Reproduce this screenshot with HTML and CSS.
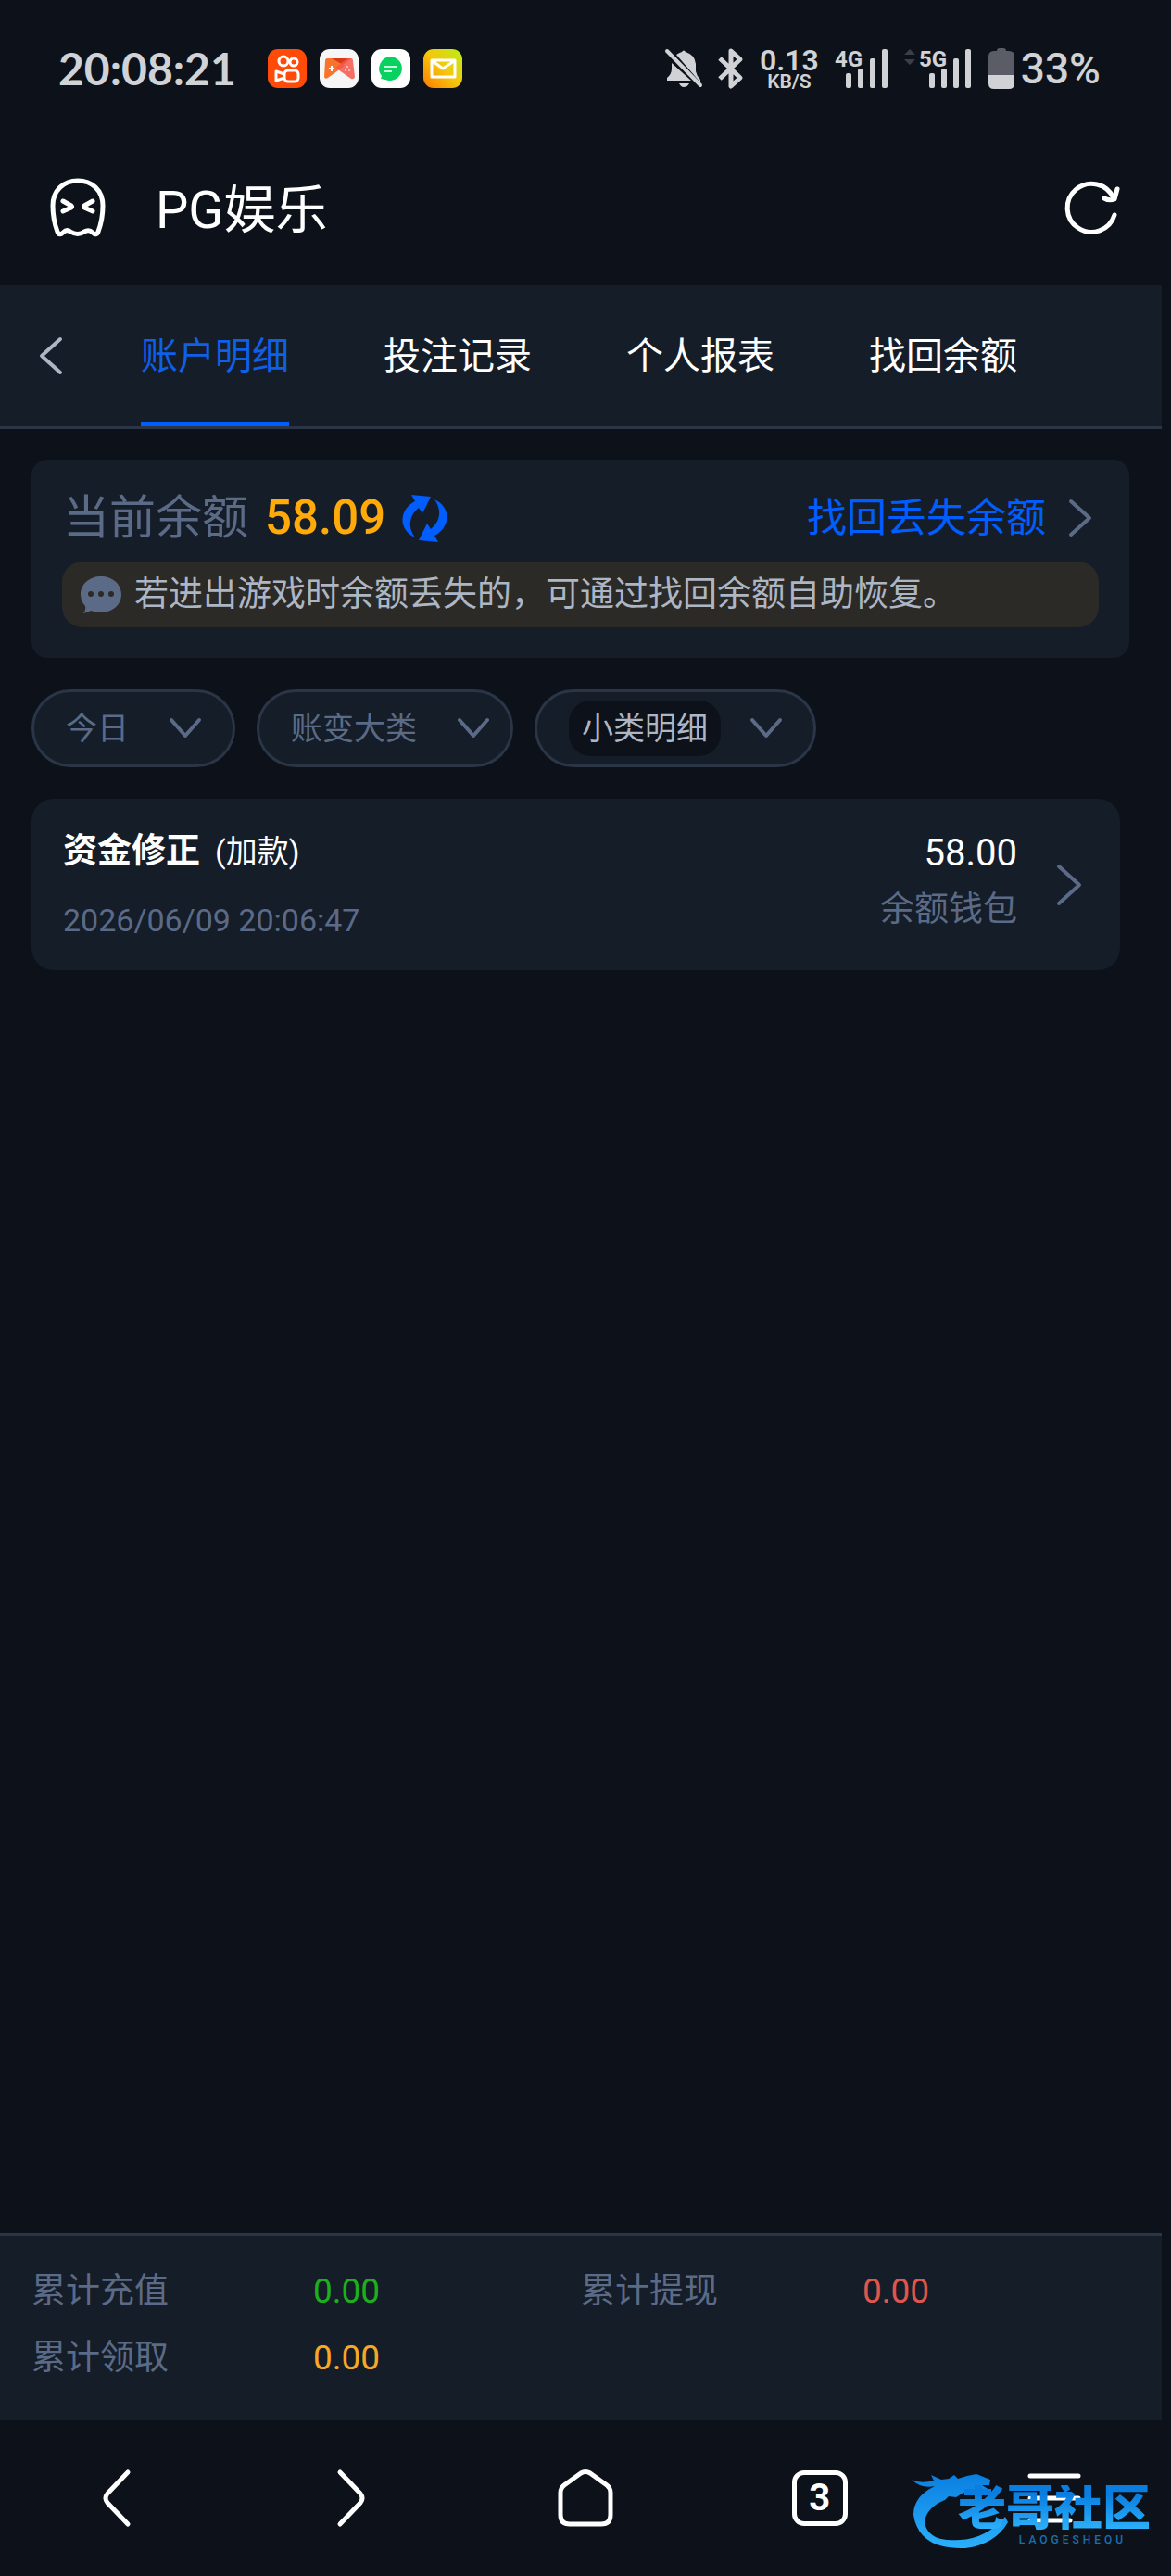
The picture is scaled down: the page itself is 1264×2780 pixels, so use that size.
FILE: index.html
```html
<!DOCTYPE html>
<html lang="zh-CN">
<head>
    <meta charset="UTF-8">
    <meta name="viewport" content="width=device-width, initial-scale=1.0">
    <title>PG娱乐</title>
    <link rel="stylesheet" href="styles.css">
</head>
<body>
    <div class="status-bar">
        <span class="clock">20:08:21</span>
        <div class="app-icons">
            <svg width="42" height="42" viewBox="0 0 42 42">
                <rect width="42" height="42" rx="11" fill="#ff4a08"/>
                <g fill="none" stroke="#fff" stroke-width="3" stroke-linejoin="round">
                    <circle cx="17" cy="13" r="5"/>
                    <circle cx="28" cy="14" r="4"/>
                    <rect x="18" y="23" width="15" height="12" rx="4"/>
                    <path d="M18 27L9 24V34L18 31"/>
                </g>
            </svg>
            <svg width="42" height="42" viewBox="0 0 42 42">
                <rect width="42" height="42" rx="11" fill="#f6f6f6"/>
                <path d="M8 10H34L21 20Z" fill="#d93a14"/>
                <path d="M8 10Q6 10 6 13L5 30Q6 33 9 31L27 18L13 10Z" fill="#f8742c"/>
                <path d="M34 10Q36 10 36 13L38 30Q37 33 34 32L17 20L30 10Z" fill="#f4574a" fill-opacity=".85"/>
                <path d="M10 21H16M13 18V24" stroke="#fff" stroke-width="2"/>
                <g fill="#fcc"><circle cx="30" cy="19" r="1"/><circle cx="28" cy="23" r="1"/><circle cx="32" cy="23" r="1"/></g>
            </svg>
            <svg width="42" height="42" viewBox="0 0 42 42">
                <rect width="42" height="42" rx="11" fill="#fff"/>
                <path d="M21 8A13 13 0 1 1 15 33L10 32L11 29A13 13 0 0 1 21 8Z" fill="#07d160"/>
                <path d="M14 19H28M14 24H22" stroke="#c6ffdc" stroke-width="2"/>
            </svg>
            <svg width="42" height="42" viewBox="0 0 42 42">
                <defs>
                    <linearGradient id="mail" x1="0" y1="1" x2="1" y2="0">
                        <stop offset="0" stop-color="#ff7a00"/>
                        <stop offset=".5" stop-color="#f5c60c"/>
                        <stop offset="1" stop-color="#b8f016"/>
                    </linearGradient>
                </defs>
                <rect width="42" height="42" rx="11" fill="url(#mail)"/>
                <path d="M9 12H34V30H9ZM10 13L21 21L33 13" fill="none" stroke="#fff" stroke-width="3" stroke-linejoin="round"/>
            </svg>
        </div>

        <div class="status-right">
            <svg class="bell" width="40" height="42" viewBox="0 0 40 42" fill="currentColor">
                <path d="M12 6Q15 4 18 3Q20 0 22 3Q32 6 33 16V24Q34 29 38 33V36Z"/>
                <path d="M7 15L28 34H2V31Q7 27 7 21Z"/>
                <path d="M15 37H26Q24 41 20 41Q17 41 15 37Z"/>
                <path d="M2 2L38 39" stroke="currentColor" stroke-width="4" stroke-linecap="round"/>
            </svg>
            <svg class="bluetooth" width="28" height="44" viewBox="0 0 28 44" fill="none" stroke="currentColor" stroke-width="5" stroke-linejoin="round">
                <path d="M2 11L24 32L14 41V3L24 12L2 33"/>
            </svg>
            <div class="speed">
                <span class="speed-value">0.13</span>
                <span class="speed-unit">KB/S</span>
            </div>
            <svg class="signal" width="58" height="44" viewBox="0 0 58 44" fill="currentColor">
                <text x="0" y="20">4G</text>
                <rect x="12" y="27" width="6" height="16" rx="2"/>
                <rect x="25" y="22" width="6" height="21" rx="2"/>
                <rect x="38" y="11" width="6" height="32" rx="2"/>
                <rect x="51" y="1" width="6" height="42" rx="2"/>
            </svg>
            <svg class="signal" width="74" height="44" viewBox="0 0 74 44" fill="currentColor">
                <path d="M0 7L6 1L12 7ZM0 12L6 18L12 12Z" fill="#3a3f49"/>
                <text x="16" y="20">5G</text>
                <rect x="27" y="27" width="6" height="16" rx="2"/>
                <rect x="40" y="22" width="6" height="21" rx="2"/>
                <rect x="53" y="11" width="6" height="32" rx="2"/>
                <rect x="66" y="1" width="6" height="42" rx="2"/>
            </svg>
            <div class="battery">
                <svg width="28" height="44" viewBox="0 0 28 44">
                    <path d="M9 3Q9 0 12 0H16Q19 0 19 3H22Q28 3 28 9V29H0V9Q0 3 6 3Z" fill="#5a5d65"/>
                    <path d="M0 29H28V38Q28 44 22 44H6Q0 44 0 38Z" fill="currentColor"/>
                </svg>
                <span>33%</span>
            </div>
        </div>
    </div>

    <header class="header">
        <svg width="60" height="64" viewBox="0 0 60 64" fill="none" stroke="#fff" stroke-width="5" stroke-linecap="round" stroke-linejoin="round">
            <path d="M3 30C3 42 5 50 8 58Q10 63 14 59Q18 55 22 58Q30 63 37 58Q42 55 46 59Q50 63 52 58C55 50 57 42 57 30C57 13 45 3 30 3C15 3 3 13 3 30Z"/>
            <path d="M14 25L23 30Q24 31 23 32L14 36M46 25L37 30Q36 31 37 32L46 36"/>
        </svg>
        <h1>PG娱乐</h1>
        <button type="button" class="icon-btn" aria-label="刷新">
            <svg width="60" height="60" viewBox="0 0 60 60" fill="none" stroke="#fff" stroke-width="5" stroke-linecap="round" stroke-linejoin="round">
                <path d="M54 38A26 26 0 1 1 53 20"/>
                <path d="M57 10L54 21Q48 23 43 20"/>
            </svg>
        </button>
    </header>

    <nav class="tabs">
        <button type="button" class="icon-btn back" aria-label="返回">
            <svg width="26" height="42" viewBox="0 0 26 42"><path d="M23 3L3 21L23 39"/></svg>
        </button>
        <a href="#" class="tab active">账户明细</a>
        <a href="#" class="tab">投注记录</a>
        <a href="#" class="tab">个人报表</a>
        <a href="#" class="tab">找回余额</a>
    </nav>

    <main class="content">
        <section class="balance-card">
            <div class="balance-row">
                <span class="balance-label">当前余额</span>
                <span class="balance-value">58.09</span>
                <button type="button" class="icon-btn" aria-label="刷新余额">
                    <svg width="49" height="51" viewBox="0 0 49 51" fill="#005dfe">
                        <path id="swirl" d="M10 0L31 2L22 20L18 14C6 24 7 36 14 46C-4 38 -4 16 14 7Z"/>
                        <use href="#swirl" transform="rotate(180 24.500 25.500)"/>
                    </svg>
                </button>
                <a href="#" class="recover">
                    找回丢失余额
                    <svg width="26" height="42" viewBox="0 0 26 42"><path d="M3 3L23 21L3 39"/></svg>
                </a>
            </div>
            <p class="notice">
                <svg width="44" height="40" viewBox="0 0 44 40">
                    <path d="M22 0C34 0 44 8 44 19.500S34 39 22 39Q16 39 11 37Q8 39 3 40Q6 36 5 32Q0 27 0 19.500C0 8 10 0 22 0Z" fill="#5b6b87"/>
                    <g fill="#2c2a26"><circle cx="11" cy="19" r="3"/><circle cx="22" cy="19" r="3"/><circle cx="33" cy="19" r="3"/></g>
                </svg>
                若进出游戏时余额丢失的，可通过找回余额自助恢复。
            </p>
        </section>

        <form class="filters">
            <label class="filter">
                <select aria-label="日期"><option>今日</option></select>
                <svg width="34" height="22" viewBox="0 0 34 22"><path d="M2 2L17 19L32 2"/></svg>
            </label>
            <label class="filter filter-type">
                <select aria-label="账变大类"><option>账变大类</option></select>
                <svg width="34" height="22" viewBox="0 0 34 22"><path d="M2 2L17 19L32 2"/></svg>
            </label>
            <label class="filter filter-detail">
                <select aria-label="小类明细"><option>小类明细</option></select>
                <svg width="34" height="22" viewBox="0 0 34 22"><path d="M2 2L17 19L32 2"/></svg>
            </label>
        </form>

        <a href="#" class="record">
            <div class="record-info">
                <div class="record-title"><strong>资金修正</strong><span>(加款)</span></div>
                <time class="record-time">2026/06/09 20:06:47</time>
            </div>
            <div class="record-amount">
                <span class="amount">58.00</span>
                <span class="wallet">余额钱包</span>
            </div>
            <svg width="28" height="46" viewBox="0 0 28 46"><path d="M3 3L25 23L3 43"/></svg>
        </a>
    </main>

    <dl class="summary">
        <div><dt>累计充值</dt><dd class="green">0.00</dd></div>
        <div><dt>累计提现</dt><dd class="red">0.00</dd></div>
        <div><dt>累计领取</dt><dd class="orange">0.00</dd></div>
    </dl>

    <footer class="toolbar">
        <button type="button" aria-label="后退">
            <svg width="30" height="62" viewBox="0 0 30 62"><path d="M27 3L5 26Q1 31 5 36L27 59"/></svg>
        </button>
        <button type="button" aria-label="前进">
            <svg width="30" height="62" viewBox="0 0 30 62"><path d="M3 3L25 26Q29 31 25 36L3 59"/></svg>
        </button>
        <button type="button" aria-label="主页">
            <svg width="60" height="62" viewBox="0 0 60 62"><path d="M3 25Q3 20 7 17L25 4Q30 1 35 4L53 17Q57 20 57 25V49Q57 59 47 59H13Q3 59 3 49Z"/></svg>
        </button>
        <button type="button" aria-label="标签页"><span class="tab-count">3</span></button>
        <button type="button" aria-label="菜单">
            <svg width="58" height="54" viewBox="0 0 58 54"><path d="M3 3H55M3 27H55M3 51H46"/></svg>
        </button>
        <div class="watermark">
            <svg width="90" height="90" viewBox="0 0 90 90">
                <defs>
                    <linearGradient id="dragon" x1="0" y1="0" x2="0" y2="1">
                        <stop offset="0" stop-color="#0a7ee0"/>
                        <stop offset="1" stop-color="#2bb0fb"/>
                    </linearGradient>
                </defs>
                <path d="M0 14Q10 19 24 15L21 9L32 14L40 13L46 9L50 13L60 10L70 8L85 14L84 20L76 20L84 25L80 31L68 27L62 30L56 28L48 33L40 32L36 36Q16 44 14 60Q18 82 52 79Q80 78 101 54L104 60Q90 84 58 88Q8 90 2 52Q2 32 25 21Q10 24 0 14Z" fill="url(#dragon)"/>
            </svg>
            <div class="watermark-text">
                <span class="watermark-name">老哥社区</span>
                <span class="watermark-latin">LAOGESHEQU</span>
            </div>
        </div>
    </footer>
</body>
</html>
```
FILE: styles.css
```css
* {
    box-sizing: border-box;
}
body {
    margin: 0;
    min-height: 100vh;
    display: flex;
    flex-direction: column;
    background-color: #0d121a;
    color: #fff;
    font-family: Roboto, "Noto Sans CJK SC", sans-serif;
    font-size: 37px;
    line-height: 48px;
}
a {
    color: inherit;
    text-decoration: none;
}
button {
    padding: 0;
    border: none;
    background: none;
    color: inherit;
    font: inherit;
    cursor: pointer;
}
svg {
    display: block;
    flex: none;
    overflow: visible;
}

/* status bar */
.status-bar {
    display: flex;
    align-items: center;
    height: 148px;
    padding: 0 76px 0 63px;
    color: #d0d2d5;
}
.clock {
    font-family: Lato, sans-serif;
    font-size: 48px;
    font-weight: 700;
}
.app-icons {
    display: flex;
    gap: 14px;
    margin-left: 34px;
}
.status-right {
    display: flex;
    align-items: center;
    gap: 17px;
    margin-left: auto;
}
.speed {
    display: flex;
    flex-direction: column;
    align-items: center;
    font-weight: 600;
}
.speed-value {
    font-size: 32px;
    line-height: 28px;
}
.speed-unit {
    font-size: 21px;
    line-height: 18px;
}
.signal text {
    font-size: 24px;
    font-weight: 700;
}
.battery {
    display: flex;
    align-items: center;
    gap: 7px;
    font-size: 46px;
    font-weight: 500;
}

/* header */
.header {
    display: flex;
    align-items: center;
    height: 160px;
    padding: 0 55px 8px 54px;
}
.header h1 {
    margin: 0 auto 0 54px;
    padding-top: 5px;
    font-size: 56px;
    font-weight: 400;
    line-height: 64px;
}

/* tabs */
.tabs {
    display: flex;
    align-items: stretch;
    gap: 102px;
    height: 155px;
    margin-right: 10px;
    padding-left: 42px;
    background-color: #151d28;
    border-bottom: 3px solid #2a3546;
}
.tabs .back {
    margin-right: -18px;
}
.back path,
.recover path,
.filter path,
.record path {
    fill: none;
    stroke: #5b6b87;
    stroke-width: 4;
    stroke-linecap: round;
    stroke-linejoin: round;
}
.back path {
    stroke: #adb6c4;
}
.tab {
    display: flex;
    align-items: center;
    padding-top: 6px;
    border-bottom: 5px solid transparent;
    font-size: 40px;
}
.tab.active {
    color: #0f5fe8;
    border-bottom-color: #005dfe;
}

/* content */
.content {
    flex: 1;
    padding: 33px 45px 33px 34px;
}
.balance-card {
    padding: 31px 33px 33px;
    background-color: #151d28;
    border-radius: 17px;
}
.balance-row {
    display: flex;
    align-items: center;
    height: 64px;
    padding: 0 7px 0 1px;
    margin-bottom: 15px;
}
.balance-label {
    color: #5b6b87;
    font-size: 50px;
}
.balance-value {
    margin: 0 18px;
    color: #ffaa09;
    font-size: 51px;
    font-weight: 500;
}
.recover {
    display: flex;
    align-items: center;
    gap: 24px;
    margin-left: auto;
    color: #005dfe;
    font-size: 43px;
}
.notice {
    display: flex;
    align-items: center;
    gap: 14px;
    margin: 0;
    padding: 12px 20px 11px;
    background-color: #2c2a26;
    border-radius: 22px;
    color: #adb6c4;
}

/* filters */
.filters {
    display: flex;
    gap: 23px;
    margin: 34px 0;
}
.filter {
    display: flex;
    align-items: center;
    gap: 44px;
    height: 84px;
    padding: 0 34px;
    background-color: #151d28;
    border: 3px solid #2a3546;
    border-radius: 42px;
}
.filter select {
    appearance: none;
    padding: 0;
    border: none;
    background: none;
    color: #5b6b87;
    font-family: inherit;
    font-size: 34px;
    line-height: 48px;
    cursor: pointer;
}
.filter-type {
    padding-right: 23px;
}
.filter-detail {
    gap: 32px;
}
.filter-detail select {
    padding: 6px 14px;
    background-color: #0d121a;
    border-radius: 24px;
    color: #adb6c4;
}

/* record */
.record {
    display: flex;
    align-items: center;
    height: 185px;
    margin-right: 10px;
    padding: 0 41px 0 34px;
    background-color: #151d28;
    border-radius: 24px;
}
.record-info {
    display: flex;
    flex-direction: column;
    gap: 26px;
    padding-top: 3px;
}
.record-title {
    display: flex;
    align-items: center;
    gap: 16px;
}
.record-title span {
    font-size: 34px;
}
.record-time {
    color: #5b6b87;
    font-size: 34px;
}
.record-amount {
    display: flex;
    flex-direction: column;
    align-items: flex-end;
    gap: 13px;
    margin: 0 42px 6px auto;
}
.amount {
    font-size: 40px;
}
.wallet {
    color: #5b6b87;
}

/* totals */
.summary {
    display: grid;
    grid-template-columns: 1fr 1fr;
    row-gap: 24px;
    margin: 0 10px 0 0;
    padding: 36px 34px 43px;
    background-color: #151d28;
    border-top: 3px solid #2a3546;
}
.summary div {
    display: flex;
}
.summary dt {
    width: 304px;
    color: #5b6b87;
}
.summary dd {
    margin: 0;
}
.green {
    color: #1cb01c;
}
.red {
    color: #e0564c;
}
.orange {
    color: #f5a925;
}

/* browser toolbar */
.toolbar {
    position: relative;
    display: grid;
    grid-template-columns: repeat(5, 1fr);
    align-items: center;
    justify-items: center;
    height: 168px;
}
.toolbar button path {
    fill: none;
    stroke: #fff;
    stroke-width: 5;
    stroke-linecap: round;
    stroke-linejoin: round;
}
.tab-count {
    display: flex;
    align-items: center;
    justify-content: center;
    width: 60px;
    height: 60px;
    border: 5px solid #fff;
    border-radius: 13px;
    font-size: 40px;
    font-weight: 700;
}
.watermark {
    position: absolute;
    right: 22px;
    bottom: 28px;
    display: flex;
    align-items: flex-end;
    pointer-events: none;
}
.watermark-text {
    display: flex;
    flex-direction: column;
    margin: 0 0 4px -40px;
}
.watermark-name {
    background: linear-gradient(#0a7ee0 20%, #2bb0fb 90%);
    background-clip: text;
    color: transparent;
    font-size: 52px;
    font-weight: 900;
    line-height: 52px;
}
.watermark-latin {
    align-self: center;
    margin-left: 40px;
    color: #1a6fb0;
    font-size: 12px;
    font-weight: 500;
    letter-spacing: 4px;
    line-height: 14px;
}
```
